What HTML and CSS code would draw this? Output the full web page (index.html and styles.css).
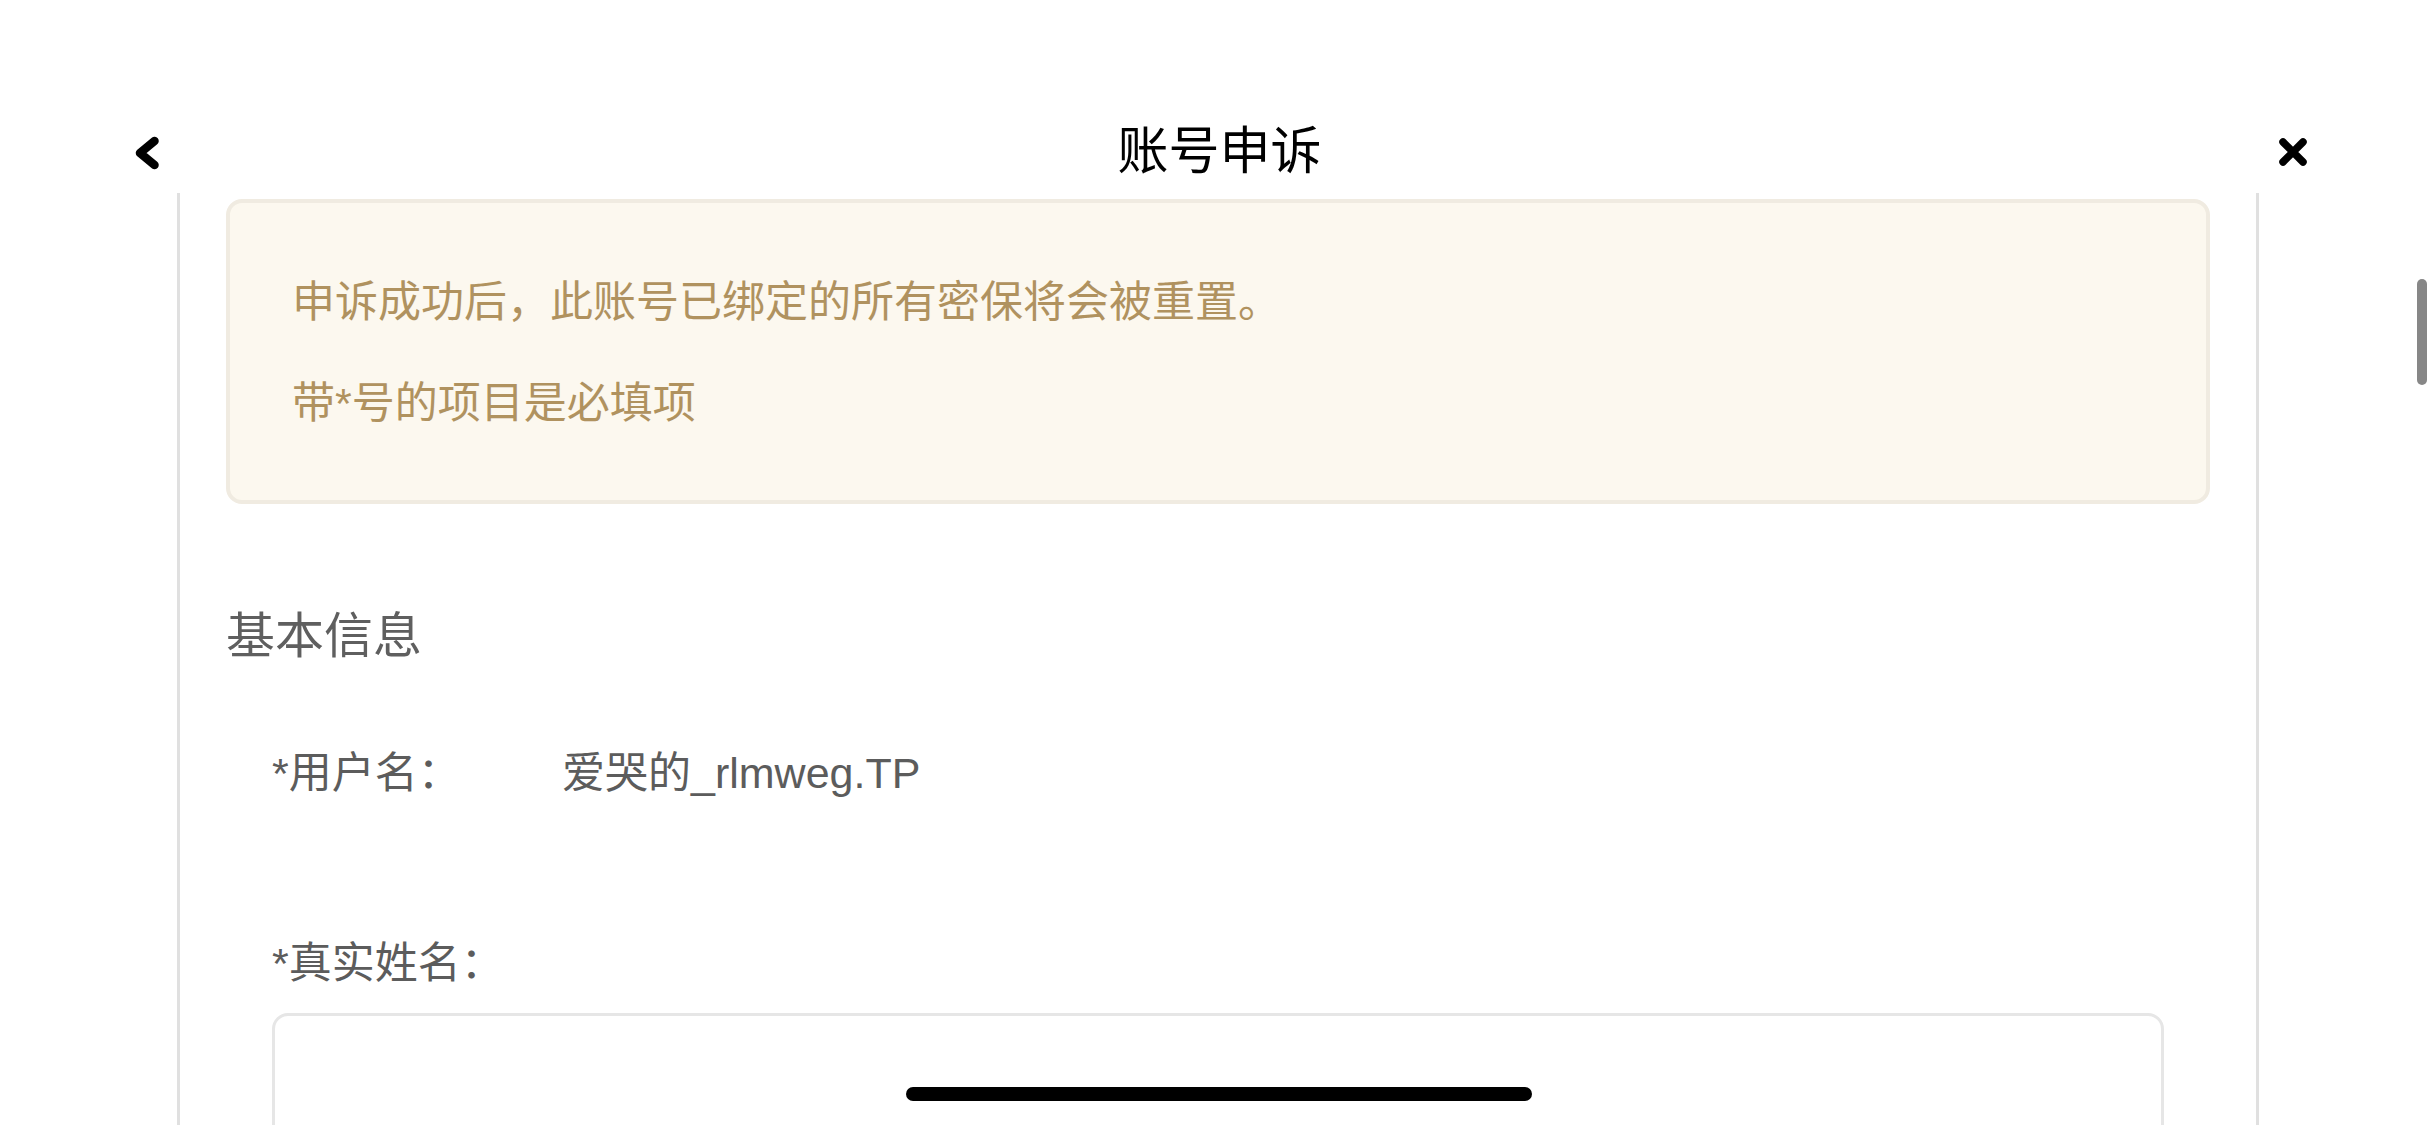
FILE: index.html
```html
<!DOCTYPE html>
<html lang="zh-CN">
<head>
<meta charset="utf-8">
<title>账号申诉</title>
<link rel="stylesheet" href="styles.css">
</head>
<body>
<header class="topbar">
  <button class="icon-btn back" aria-label="返回">
    <svg width="24" height="34" viewBox="0 0 24 34"><polyline points="19.5,5 5,17 19.5,29" fill="none" stroke="#000" stroke-width="8.5" stroke-linecap="round" stroke-linejoin="round"/></svg>
  </button>
  <h1 class="title">账号申诉</h1>
  <button class="icon-btn close" aria-label="关闭">
    <svg width="30" height="30" viewBox="0 0 30 30"><path d="M5 5 L25 25 M25 5 L5 25" fill="none" stroke="#000" stroke-width="7.5" stroke-linecap="round"/></svg>
  </button>
</header>
<main class="page">
  <div class="content">
    <div class="notice">
      <p>申诉成功后，此账号已绑定的所有密保将会被重置。</p>
      <p>带*号的项目是必填项</p>
    </div>
    <h2 class="section-title">基本信息</h2>
    <div class="form">
      <div class="row inline">
        <span class="label">*用户名：</span>
        <span class="value">爱哭的_rlmweg.TP</span>
      </div>
      <div class="row stacked">
        <span class="label">*真实姓名：</span>
        <div class="input"></div>
      </div>
    </div>
  </div>
</main>
<div class="scroll-thumb"></div>
<div class="home-indicator"></div>
</body>
</html>
```
FILE: styles.css
```css
html, body {
  margin: 0;
  padding: 0;
  background: #fff;
}
body {
  width: 2436px;
  height: 1125px;
  overflow: hidden;
  font-family: "Liberation Sans", "Noto Sans CJK SC", sans-serif;
}
.topbar {
  box-sizing: border-box;
  margin-top: 110px;
  height: 83px;
  padding: 0 128px 0 135px;
  display: grid;
  grid-template-columns: 1fr auto 1fr;
  align-items: center;
}
.icon-btn {
  border: 0;
  padding: 0;
  margin: 0;
  background: none;
  display: flex;
  line-height: 0;
}
.back { justify-self: start; margin-top: 3px; }
.close { justify-self: end; margin-top: 1px; }
.title {
  margin: 0;
  font-size: 51px;
  font-weight: 400;
  line-height: 83px;
  color: #000;
  position: relative;
  left: -2px;
}
.page {
  margin: 0 177px;
  border-left: 3px solid #e0e0e0;
  border-right: 3px solid #e0e0e0;
  min-height: 1000px;
}
.content {
  padding: 6px 46px 0;
}
.notice {
  background: #fcf8ef;
  border: 4px solid #f0ebe1;
  border-radius: 16px;
  padding: 69px 62px 67px;
  display: flex;
  flex-direction: column;
  gap: 41px;
}
.notice p {
  margin: 0;
  font-size: 43px;
  line-height: 60px;
  color: #b0925f;
}
.section-title {
  margin: 99px 0 0;
  font-size: 49px;
  font-weight: 400;
  line-height: 67px;
  color: #5f5f5f;
}
.form {
  padding: 0 46px;
  margin-top: 73px;
  display: flex;
  flex-direction: column;
  gap: 130px;
}
.row {
  font-size: 43px;
  line-height: 60px;
  color: #5c5c5c;
}
.row.inline {
  display: flex;
}
.row.inline .label {
  width: 290px;
  flex: none;
}
.row.stacked {
  display: flex;
  flex-direction: column;
  gap: 20px;
}
.input {
  height: 200px;
  border: 3px solid #e6e6e6;
  border-radius: 16px;
  background: #fff;
}
.scroll-thumb {
  position: fixed;
  left: 2417px;
  top: 279px;
  width: 10px;
  height: 106px;
  border-radius: 5px;
  background: #878787;
}
.home-indicator {
  position: fixed;
  left: 906px;
  top: 1087px;
  width: 626px;
  height: 14px;
  border-radius: 7px;
  background: #000;
}
```
